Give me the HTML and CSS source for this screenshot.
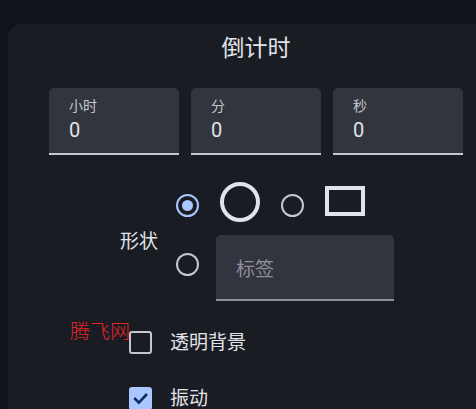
FILE: index.html
```html
<!DOCTYPE html>
<html lang="zh">
<head>
<meta charset="utf-8">
<title>倒计时</title>
<link rel="stylesheet" href="styles.css">
</head>
<body>
<div class="card">
  <div class="title">倒计时</div>
  <div class="fields">
    <div class="field">
      <div class="field-label">小时</div>
      <div class="field-value">0</div>
    </div>
    <div class="field">
      <div class="field-label">分</div>
      <div class="field-value">0</div>
    </div>
    <div class="field">
      <div class="field-label">秒</div>
      <div class="field-value">0</div>
    </div>
  </div>
  <div class="shape">
    <div class="shape-label">形状</div>
    <div class="shape-options">
      <div class="shape-row">
        <span class="radio radio-on"></span>
        <span class="shape-circle"></span>
        <span class="radio"></span>
        <span class="shape-rect"></span>
      </div>
      <div class="shape-row shape-row-2">
        <span class="radio"></span>
        <div class="tag-field"><span class="placeholder">标签</span></div>
      </div>
    </div>
  </div>
  <div class="checks">
    <div class="check-row">
      <span class="checkbox"></span>
      <span class="check-label">透明背景</span>
    </div>
    <div class="check-row">
      <span class="checkbox checkbox-on">
        <svg viewBox="0 0 24 24" width="23" height="23"><path d="M6.5 12.5l3.8 3.8 7.5-8" fill="none" stroke="#0a305f" stroke-width="2.8" stroke-linecap="square"/></svg>
      </span>
      <span class="check-label">振动</span>
    </div>
  </div>
</div>
<div class="watermark">腾飞网</div>
</body>
</html>
```

FILE: styles.css
```css
html, body {
  margin: 0;
  padding: 0;
}
body {
  background: #10131a;
  font-family: Roboto, "Noto Sans CJK SC", sans-serif;
  color: #e2e2e9;
  overflow: hidden;
  width: 476px;
  height: 409px;
  position: relative;
}
.card {
  margin: 24px 0 0 8px;
  width: 496px;
  height: 385px;
  background: #191c22;
  border-radius: 14px 14px 0 0;
  padding-top: 10px;
  box-sizing: border-box;
  overflow: hidden;
}
.title {
  text-align: center;
  font-size: 23px;
  line-height: 30px;
  color: #e2e2e9;
}
.fields {
  display: flex;
  justify-content: center;
  gap: 12px;
  margin-top: 24px;
}
.field {
  width: 130px;
  height: 67px;
  box-sizing: border-box;
  background: #32353d;
  border-radius: 5px 5px 0 0;
  border-bottom: 2px solid #c4c6cf;
  padding: 9px 0 0 20px;
}
.field-label {
  font-size: 14px;
  line-height: 18px;
  color: #c4c6d0;
}
.field-value {
  font-size: 20px;
  line-height: 24px;
  margin-top: 3px;
  color: #e2e2e9;
}
.shape {
  display: flex;
  align-items: center;
  margin: 27px 0 0 112px;
}
.shape-label {
  font-size: 19px;
  line-height: 24px;
  width: 38px;
  margin-right: 18px;
  white-space: nowrap;
}
.shape-options {
  display: flex;
  flex-direction: column;
  gap: 13px;
}
.shape-row {
  display: flex;
  align-items: center;
  gap: 21px;
  height: 40px;
}
.shape-row-2 {
  gap: 17px;
  height: 66px;
}
.radio {
  width: 23px;
  height: 23px;
  box-sizing: border-box;
  border: 2px solid #c4c6d0;
  border-radius: 50%;
  display: flex;
  align-items: center;
  justify-content: center;
  flex: none;
}
.radio-on {
  border-color: #aac7ff;
}
.radio-on::after {
  content: "";
  width: 11px;
  height: 11px;
  border-radius: 50%;
  background: #aac7ff;
}
.shape-row .radio {
  margin-top: 6px;
}
.shape-row-2 .radio {
  margin-top: -8px;
}
.shape-circle {
  width: 40px;
  height: 40px;
  box-sizing: border-box;
  border: 4px solid #e2e2e9;
  border-radius: 50%;
  flex: none;
}
.shape-rect {
  width: 40px;
  height: 30px;
  box-sizing: border-box;
  border: 4px solid #e2e2e9;
  flex: none;
  margin-top: -2px;
}
.tag-field {
  width: 178px;
  height: 66px;
  box-sizing: border-box;
  background: #32353d;
  border-radius: 5px 5px 0 0;
  border-bottom: 2px solid #8e9099;
  padding-left: 20px;
  display: flex;
  align-items: center;
}
.placeholder {
  font-size: 19px;
  color: #8e9099;
}
.checks {
  display: flex;
  flex-direction: column;
  gap: 33px;
  margin: 30px 0 0 121px;
}
.check-row {
  display: flex;
  align-items: center;
  gap: 18px;
  height: 23px;
}
.checkbox {
  width: 23px;
  height: 23px;
  box-sizing: border-box;
  border: 2.5px solid #c4c6d0;
  border-radius: 3px;
  flex: none;
  display: flex;
}
.checkbox-on {
  background: #aac7ff;
  border: none;
}
.check-label {
  font-size: 19px;
  line-height: 24px;
}
.watermark {
  position: absolute;
  left: 70px;
  top: 318px;
  font-family: "Noto Sans CJK SC", serif;
  font-weight: 300;
  font-size: 20px;
  line-height: 26px;
  color: #e3242b;
}
```
